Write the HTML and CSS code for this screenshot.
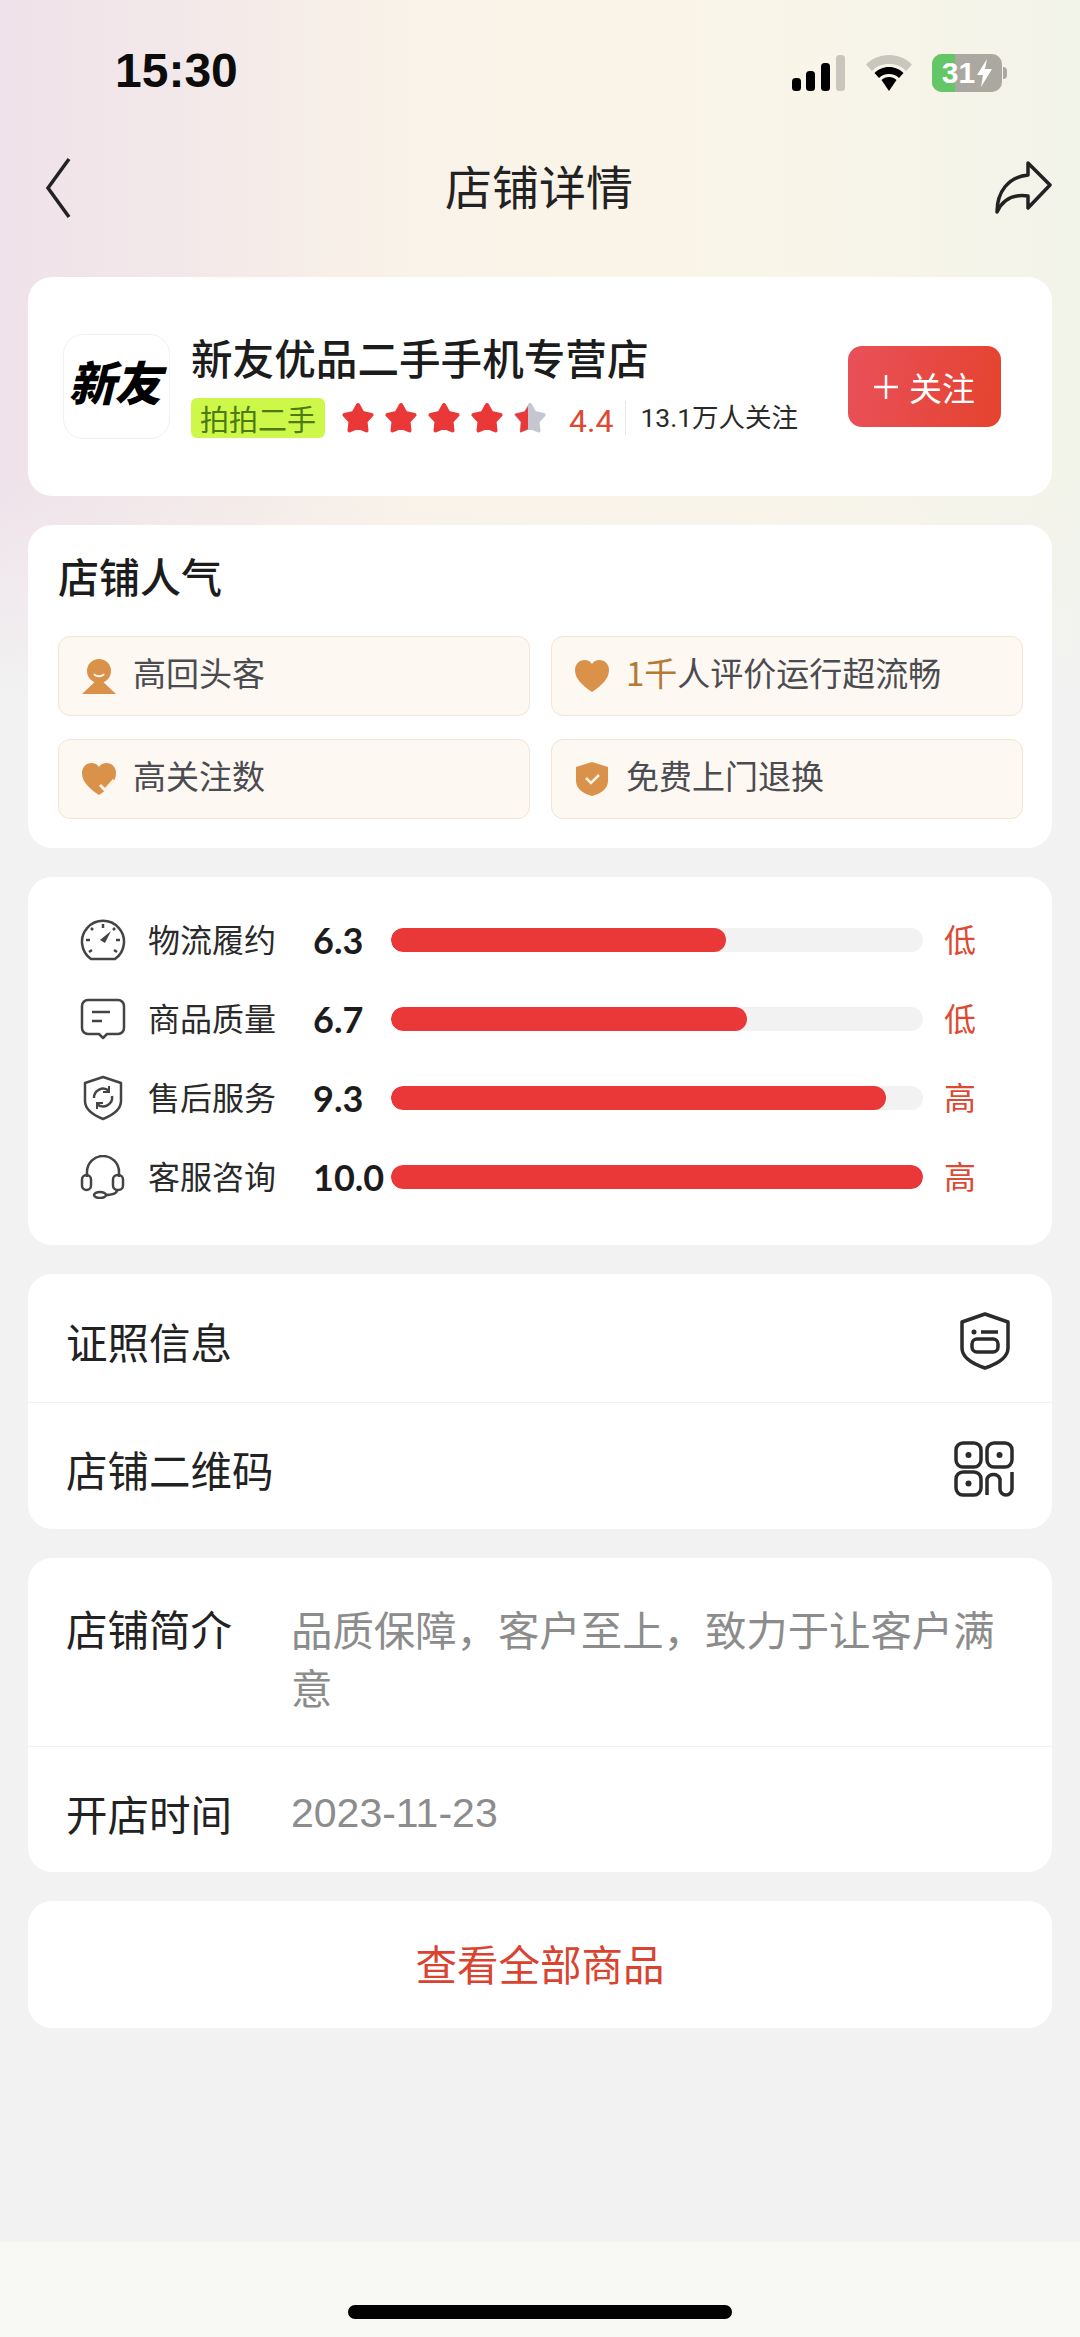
FILE: index.html
```html
<!DOCTYPE html>
<html lang="zh-CN">
<head>
  <meta charset="UTF-8" />
  <meta name="viewport" content="width=device-width, initial-scale=1" />
  <title>店铺详情</title>
  <link rel="stylesheet" href="styles.css">
</head>
<body>
  <div class="page">

    <div class="status-bar">
      <span class="time">15:30</span>
      <div class="status-icons">
        <svg class="signal" width="54" height="36" viewBox="0 0 54 36">
          <rect x="0" y="23" width="9" height="13" rx="3.5" fill="#000"/>
          <rect x="14" y="16" width="9" height="20" rx="3.5" fill="#000"/>
          <rect x="29" y="8" width="9" height="28" rx="3.5" fill="#000"/>
          <rect x="44" y="0" width="9" height="36" rx="3.5" fill="#c9c6be"/>
        </svg>
        <svg class="wifi" width="46" height="36" viewBox="0 0 46 36">
          <path d="M23 0C14 0 6 3.5 0 9.500L6 16C10 11.500 16 9 23 9C30 9 36 11.500 40 16L46 9.500C40 3.500 32 0 23 0Z" fill="#c9c6be"/>
          <path d="M23 12C17 12 12 14.500 8.500 18L13 23C15.500 20.500 19 19 23 19C27 19 30.500 20.500 33 23L37.500 18C34 14.500 29 12 23 12Z" fill="#000"/>
          <path d="M23 22C20 22 17.500 23 15.500 25L23 36L30.500 25C28.500 23 26 22 23 22Z" fill="#000"/>
        </svg>
        <div class="battery">
          <div class="battery-body">
            <div class="battery-fill"></div>
            <span class="battery-text">31</span>
            <svg class="bolt" width="15" height="28" viewBox="0 0 15 28"><path d="M10 0L0 16H6L4 28L15 10H8Z" fill="#fff"/></svg>
          </div>
          <div class="battery-cap"></div>
        </div>
      </div>
    </div>

    <div class="nav">
      <svg width="28" height="62" viewBox="0 0 28 62"><path d="M25 2L4 31L25 60" fill="none" stroke="#222" stroke-width="3.500"/></svg>
      <span class="nav-title">店铺详情</span>
      <svg width="58" height="56" viewBox="0 0 58 56"><path d="M34 3L56 25L34 48V36C20 34 9 39 3 52C3 32 14 17 34 15Z" fill="none" stroke="#222" stroke-width="3.500" stroke-linejoin="round"/></svg>
    </div>

    <div class="card shop-card">
      <div class="logo"><span>新友</span></div>
      <div class="shop-info">
        <div class="shop-name">新友优品二手手机专营店</div>
        <div class="shop-sub">
          <span class="paipai">拍拍二手</span>
          <div class="stars">
            <svg width="32" height="32" viewBox="0 0 32 32"><path class="star-on" d="M16 3L20.500 11L29.500 13L23.500 19.500L24.500 28.500L16 25L7.500 28.500L8.500 19.500L2.500 13L11.500 11Z"/></svg>
            <svg width="32" height="32" viewBox="0 0 32 32"><path class="star-on" d="M16 3L20.500 11L29.500 13L23.500 19.500L24.500 28.500L16 25L7.500 28.500L8.500 19.500L2.500 13L11.500 11Z"/></svg>
            <svg width="32" height="32" viewBox="0 0 32 32"><path class="star-on" d="M16 3L20.500 11L29.500 13L23.500 19.500L24.500 28.500L16 25L7.500 28.500L8.500 19.500L2.500 13L11.500 11Z"/></svg>
            <svg width="32" height="32" viewBox="0 0 32 32"><path class="star-on" d="M16 3L20.500 11L29.500 13L23.500 19.500L24.500 28.500L16 25L7.500 28.500L8.500 19.500L2.500 13L11.500 11Z"/></svg>
            <svg width="32" height="32" viewBox="0 0 32 32">
              <path class="star-off" d="M16 3L20.500 11L29.500 13L23.500 19.500L24.500 28.500L16 25L7.500 28.500L8.500 19.500L2.500 13L11.500 11Z"/>
              <path class="star-half" d="M14 4.500L10.500 9.500L0.500 12L7 20L6 30.500L14 27.200Z"/>
            </svg>
          </div>
          <span class="score">4.4</span>
          <span class="followers">13.1万人关注</span>
        </div>
      </div>
      <div class="follow-btn">
        <svg width="24" height="24" viewBox="0 0 24 24"><path d="M12 0V24M0 12H24" stroke="#fff" stroke-width="2.500"/></svg>
        <span>关注</span>
      </div>
    </div>

    <div class="card popular-card">
      <div class="section-title">店铺人气</div>
      <div class="tag-grid">
        <div class="tag">
          <svg width="36" height="36" viewBox="0 0 36 36">
            <circle cx="18" cy="13" r="12" fill="#da9149"/>
            <path d="M18 20L35 36H1Z" fill="#da9149"/>
            <path d="M13 16C15 19 21 19 23 16" fill="none" stroke="#fdf3e4" stroke-width="2"/>
          </svg>
          <span>高回头客</span>
        </div>
        <div class="tag">
          <svg width="36" height="36" viewBox="0 0 36 36"><path d="M18 34C8 27 1 21 1 12C1 6 5.500 2 10.500 2C13.500 2 16.500 3.500 18 6C19.500 3.500 22.500 2 25.500 2C30.500 2 35 6 35 12C35 21 28 27 18 34Z" fill="#da9149"/></svg>
          <span><span class="tag-num">1千</span>人评价运行超流畅</span>
        </div>
        <div class="tag">
          <svg width="36" height="36" viewBox="0 0 36 36">
            <path d="M18 34C8 27 1 21 1 12C1 6 5.500 2 10.500 2C13.500 2 16.500 3.500 18 6C19.500 3.500 22.500 2 25.500 2C30.500 2 35 6 35 12C35 21 28 27 18 34Z" fill="#da9149"/>
            <path d="M19 24L24 29L33 19" fill="none" stroke="#fdf3e4" stroke-width="3"/>
          </svg>
          <span>高关注数</span>
        </div>
        <div class="tag">
          <svg width="36" height="36" viewBox="0 0 36 36">
            <path d="M18 1L34 6V20C34 28 26 33 18 35C10 33 2 28 2 20V6Z" fill="#da9149"/>
            <path d="M12 17L17 22L25 14" fill="none" stroke="#fdf3e4" stroke-width="2.500"/>
          </svg>
          <span>免费上门退换</span>
        </div>
      </div>
    </div>

    <div class="card metrics-card">
      <div class="metric">
        <svg class="metric-icon" width="46" height="42" viewBox="0 0 46 42">
          <path d="M11 40H35A21 21 0 1 0 11 40Z" fill="none" stroke="#444" stroke-width="2.500" stroke-linejoin="round"/>
          <path d="M23 5V9M6 21H10M36 21H40M11 9L13 11M9 33L12 31M37 33L34 31M35 9L33 11" stroke="#444" stroke-width="2.500"/>
          <path d="M20 21L31 12L25 24Z" fill="#444"/>
        </svg>
        <span class="metric-label">物流履约</span>
        <span class="metric-value">6.3</span>
        <div class="bar"><div class="bar-fill" style="width: 63%"></div></div>
        <span class="metric-level">低</span>
      </div>
      <div class="metric">
        <svg class="metric-icon" width="46" height="42" viewBox="0 0 46 42">
          <path d="M8 2H38A6 6 0 0 1 44 8V30A6 6 0 0 1 38 36H27L23 40L19 36H8A6 6 0 0 1 2 30V8A6 6 0 0 1 8 2Z" fill="none" stroke="#444" stroke-width="2.500" stroke-linejoin="round"/>
          <path d="M12 14H30M12 23H22" stroke="#444" stroke-width="2.500"/>
        </svg>
        <span class="metric-label">商品质量</span>
        <span class="metric-value">6.7</span>
        <div class="bar"><div class="bar-fill" style="width: 67%"></div></div>
        <span class="metric-level">低</span>
      </div>
      <div class="metric">
        <svg class="metric-icon" width="46" height="46" viewBox="0 0 46 46">
          <path d="M23 2L41 8V26C41 34 33 40 23 44C13 40 5 34 5 26V8Z" fill="none" stroke="#444" stroke-width="2.500" stroke-linejoin="round"/>
          <path d="M14 23A9 9 0 0 1 29 16M32 21A9 9 0 0 1 17 29" fill="none" stroke="#444" stroke-width="2.500"/>
          <path d="M29 11V17H23M17 34V28H23" fill="none" stroke="#444" stroke-width="2"/>
        </svg>
        <span class="metric-label">售后服务</span>
        <span class="metric-value">9.3</span>
        <div class="bar"><div class="bar-fill" style="width: 93%"></div></div>
        <span class="metric-level">高</span>
      </div>
      <div class="metric">
        <svg class="metric-icon" width="46" height="44" viewBox="0 0 46 44">
          <path d="M7 22V17A16 16 0 0 1 39 17V22" fill="none" stroke="#444" stroke-width="2.500"/>
          <rect x="2" y="20" width="9" height="15" rx="4.500" fill="none" stroke="#444" stroke-width="2.500"/>
          <rect x="33" y="20" width="10" height="15" rx="4.500" fill="none" stroke="#444" stroke-width="2.500"/>
          <path d="M37 35C37 39 32 40 25 40" fill="none" stroke="#444" stroke-width="2.500"/>
          <ellipse cx="20" cy="40" rx="6" ry="3" fill="none" stroke="#444" stroke-width="2.500"/>
        </svg>
        <span class="metric-label">客服咨询</span>
        <span class="metric-value">10.0</span>
        <div class="bar"><div class="bar-fill" style="width: 100%"></div></div>
        <span class="metric-level">高</span>
      </div>
    </div>

    <div class="card list-card">
      <div class="list-row">
        <span>证照信息</span>
        <svg class="cert-icon" width="52" height="58" viewBox="0 0 52 58">
          <path d="M26 2L49 10V36C49 46 38 52 26 56C14 52 3 46 3 36V10Z" fill="none" stroke="#2b2b2b" stroke-width="3.500" stroke-linejoin="round"/>
          <circle cx="15" cy="20" r="2.500" fill="#2b2b2b"/>
          <path d="M22 20H39" stroke="#2b2b2b" stroke-width="3.500"/>
          <rect x="13" y="27" width="26" height="13" rx="5" fill="none" stroke="#2b2b2b" stroke-width="3.500"/>
        </svg>
      </div>
      <div class="list-row">
        <span>店铺二维码</span>
        <svg width="60" height="56" viewBox="0 0 60 56">
          <rect x="2" y="2" width="25" height="24" rx="7" fill="none" stroke="#2b2b2b" stroke-width="3.500"/>
          <rect x="33" y="2" width="25" height="24" rx="7" fill="none" stroke="#2b2b2b" stroke-width="3.500"/>
          <rect x="2" y="31" width="25" height="23" rx="7" fill="none" stroke="#2b2b2b" stroke-width="3.500"/>
          <circle cx="14.500" cy="14" r="3" fill="#2b2b2b"/>
          <circle cx="45.500" cy="14" r="3" fill="#2b2b2b"/>
          <circle cx="14.500" cy="42.500" r="3" fill="#2b2b2b"/>
          <path d="M33 54V38A7 7 0 0 1 46 38V48A6 6 0 0 0 58 48V31" fill="none" stroke="#2b2b2b" stroke-width="3.500"/>
        </svg>
      </div>
    </div>

    <div class="card intro-card">
      <div class="intro-row">
        <span class="intro-label">店铺简介</span>
        <span class="intro-text">品质保障，客户至上，致力于让客户满意</span>
      </div>
      <div class="intro-row date-row">
        <span class="intro-label">开店时间</span>
        <span class="intro-date">2023-11-23</span>
      </div>
    </div>

    <div class="card all-goods">查看全部商品</div>

    <div class="home-area">
      <div class="home-bar"></div>
    </div>
  </div>
</body>
</html>
```

FILE: styles.css
```css
* {
  box-sizing: border-box;
}

body {
  margin: 0;
  padding: 0;
  background-color: #f2f2f2;
  color: #1f1f1f;
  font-family: "Noto Sans CJK SC", "Noto Sans", sans-serif;
}

.page {
  width: 1080px;
  height: 2337px;
  overflow: hidden;
  display: flex;
  flex-direction: column;
  background-image:
    linear-gradient(to bottom, rgba(242, 242, 242, 0) 480px, #f2f2f2 700px),
    linear-gradient(to right, #efe2ea 0, #f3e8e9 180px, #f9f2e8 400px, #faf5e9 760px, #f2f3e9 1080px);
}

.status-bar {
  height: 132px;
  padding: 44px 73px 0 115px;
  display: flex;
  justify-content: space-between;
  align-items: flex-start;
}

.time {
  font-family: "Liberation Sans", sans-serif;
  font-size: 48px;
  line-height: 54px;
  font-weight: bold;
  color: #0c0c0c;
}

.status-icons {
  display: flex;
  align-items: center;
  gap: 20px;
  margin-top: 10px;
}

.battery {
  display: flex;
  align-items: center;
  gap: 1px;
}

.battery-body {
  position: relative;
  width: 70px;
  height: 38px;
  border-radius: 10px;
  background-color: #aba8a1;
  overflow: hidden;
  display: flex;
  align-items: center;
  justify-content: center;
  gap: 2px;
}

.battery-fill {
  position: absolute;
  left: 0;
  top: 0;
  bottom: 0;
  width: 23px;
  background-color: #63c766;
}

.battery-text {
  position: relative;
  font-family: "Liberation Sans", sans-serif;
  font-size: 30px;
  line-height: 38px;
  font-weight: bold;
  color: #fff;
}

.bolt {
  position: relative;
}

.battery-cap {
  width: 4px;
  height: 12px;
  border-radius: 0 4px 4px 0;
  background-color: #aba8a1;
}

.nav {
  height: 112px;
  padding: 0 28px 0 44px;
  margin-bottom: 33px;
  display: flex;
  justify-content: space-between;
  align-items: center;
}

.nav-title {
  font-size: 47px;
  line-height: 60px;
  padding-bottom: 6px;
  color: #222;
  margin-left: 12px;
}

.card {
  margin: 0 28px 29px;
  background-color: #fff;
  border-radius: 24px;
}

.shop-card {
  height: 219px;
  padding: 0 51px 0 35px;
  display: flex;
  align-items: center;
}

.logo {
  width: 107px;
  height: 105px;
  padding: 0 4px 12px 0;
  border: 1px solid #f1f1f1;
  border-radius: 20px;
  display: flex;
  align-items: center;
  justify-content: center;
}

.logo span {
  font-size: 47px;
  line-height: 50px;
  font-weight: 900;
  font-style: italic;
  color: #000;
  letter-spacing: -1px;
}

.shop-info {
  flex: 1;
  margin-left: 21px;
  padding-bottom: 4px;
}

.shop-name {
  font-size: 41.600px;
  line-height: 56px;
  font-weight: 500;
  color: #1c1c1c;
}

.shop-sub {
  margin-top: 10px;
  display: flex;
  align-items: center;
}

.paipai {
  width: 134px;
  height: 40px;
  border-radius: 6px;
  background-color: #cdf84a;
  color: #4e7a12;
  font-size: 29px;
  line-height: 40px;
  text-align: center;
}

.stars {
  display: flex;
  gap: 11px;
  margin-left: 17px;
}

.star-on {
  fill: #ea3737;
  stroke: #ea3737;
  stroke-width: 4;
  stroke-linejoin: round;
}

.star-off {
  fill: #c5c6cf;
  stroke: #c5c6cf;
  stroke-width: 4;
  stroke-linejoin: round;
}

.star-half {
  fill: #ea3737;
}

.score {
  margin-left: 23px;
  padding-top: 6px;
  font-family: "Roboto", sans-serif;
  font-size: 32px;
  line-height: 40px;
  color: #dd4a33;
}

.followers {
  margin-left: 12px;
  padding-left: 14px;
  border-left: 1px solid #e8e8e8;
  font-family: "Roboto", "Noto Sans CJK SC", sans-serif;
  font-size: 26.500px;
  line-height: 34px;
  color: #2a2a2a;
}

.follow-btn {
  width: 153px;
  height: 81px;
  border-radius: 14px;
  background: linear-gradient(100deg, #e9505a, #e5432e);
  color: #fff;
  font-size: 33px;
  display: flex;
  align-items: center;
  justify-content: center;
  gap: 11px;
}

.popular-card {
  height: 323px;
  padding: 26px 29px 0 30px;
}

.section-title {
  font-size: 41px;
  line-height: 48px;
  font-weight: 500;
  color: #1c1c1c;
}

.tag-grid {
  margin-top: 37px;
  display: grid;
  grid-template-columns: 472px 472px;
  gap: 23px 21px;
}

.tag {
  height: 80px;
  padding-left: 22px;
  border: 1.500px solid #f3e4d3;
  border-radius: 12px;
  background-color: #fdf8f1;
  display: flex;
  align-items: center;
  gap: 16px;
  font-size: 33px;
  color: #4b4b52;
}

.tag > span {
  padding-bottom: 8px;
}

.tag-num {
  color: #b47a35;
}

.metrics-card {
  height: 368px;
  padding: 23px 46px 0 52px;
  display: flex;
  flex-direction: column;
}

.metric {
  height: 79px;
  display: flex;
  align-items: center;
}

.metric-icon {
  width: 46px;
  flex: none;
}

.metric-label {
  margin-left: 22px;
  width: 165px;
  padding-bottom: 3px;
  font-size: 32px;
  line-height: 44px;
  color: #2a2a2a;
}

.metric-value {
  width: 78px;
  font-family: "Lato", sans-serif;
  font-size: 36px;
  font-weight: bold;
  color: #1c1c1c;
}

.bar {
  width: 532px;
  height: 24px;
  border-radius: 12px;
  background-color: #f2f2f2;
  overflow: hidden;
}

.bar-fill {
  height: 100%;
  border-radius: 12px;
  background-color: #ea3737;
}

.metric-level {
  margin-left: 21px;
  padding-bottom: 3px;
  font-size: 32px;
  line-height: 40px;
  color: #dd4a33;
}

.list-card {
  height: 255px;
}

.list-row {
  height: 127.500px;
  padding: 7px 38px 0 38px;
  display: flex;
  justify-content: space-between;
  align-items: center;
  font-size: 41.500px;
  color: #222;
}

.cert-icon {
  margin-right: 3px;
}

.list-row + .list-row {
  border-top: 1px solid #f2f2f2;
}

.intro-card {
  height: 314px;
}

.intro-row {
  padding: 41px 30px 0 38px;
  display: flex;
  height: 188px;
}

.intro-label {
  width: 225px;
  flex: none;
  font-size: 41.500px;
  line-height: 58px;
  color: #222;
}

.intro-text {
  font-size: 41.400px;
  line-height: 58px;
  color: #8c8c8c;
}

.date-row {
  height: 126px;
  padding-top: 37px;
  border-top: 1px solid #f2f2f2;
}

.intro-date {
  font-family: "Liberation Sans", sans-serif;
  font-size: 41px;
  line-height: 58px;
  color: #8c8c8c;
}

.all-goods {
  height: 127px;
  font-size: 41.500px;
  line-height: 125px;
  text-align: center;
  color: #d9432f;
}

.home-area {
  margin-top: auto;
  height: 95px;
  background-color: #f8f8f4;
  display: flex;
  justify-content: center;
  padding-top: 63px;
}

.home-bar {
  width: 384px;
  height: 14px;
  border-radius: 7px;
  background-color: #000;
}
```
